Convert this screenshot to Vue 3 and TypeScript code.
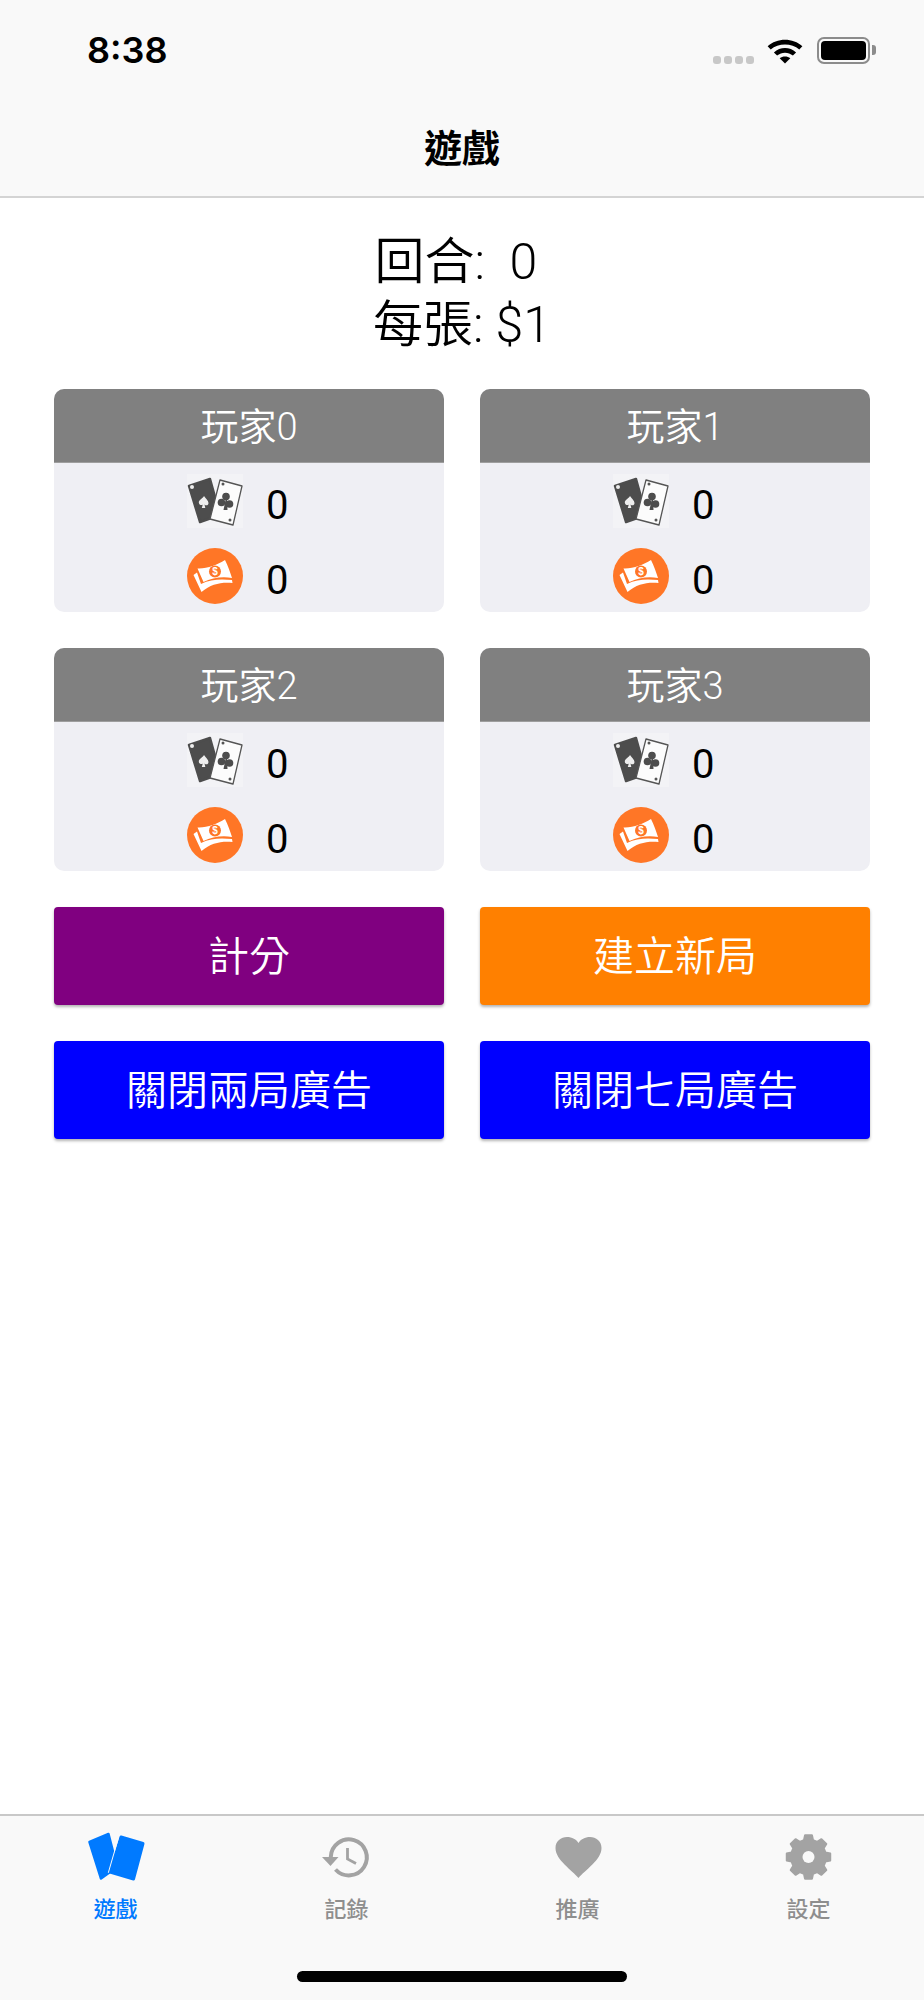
<script setup lang="ts">
const players = ['玩家0', '玩家1', '玩家2', '玩家3']
const actions = [
  { label: '計分', color: 'purple' },
  { label: '建立新局', color: 'orange' },
  { label: '關閉兩局廣告', color: 'blue' },
  { label: '關閉七局廣告', color: 'blue' }
]
const tabs = [
  { label: '遊戲', icon: 'cards', active: true },
  { label: '記錄', icon: 'history', active: false },
  { label: '推廣', icon: 'heart', active: false },
  { label: '設定', icon: 'gear', active: false }
]

function polar(radius: number, deg: number): string {
  const rad = (deg * Math.PI) / 180
  return `${(29.5 + radius * Math.sin(rad)).toFixed(2)} ${(27 - radius * Math.cos(rad)).toFixed(2)}`
}

const gearPath =
  'M' +
  Array.from({ length: 8 }, (_, i) => {
    const a = i * 45
    return [polar(17.5, a - 15), polar(22, a - 9), polar(22, a + 9), polar(17.5, a + 15)].join('L')
  }).join('L') +
  'Z'
</script>

<template>
  <div class="screen">
    <header class="top">
      <div class="status">
        <span class="time">8:38</span>
        <div class="status-icons">
          <div class="dots"><i></i><i></i><i></i><i></i></div>
          <svg class="wifi" width="38" height="27" viewBox="0 0 38 28">
            <path d="M1 9.500C10.500 .5 27.500 .5 37 9.500L33.800 13C26 6 12 6 4.200 13Z" />
            <path d="M7.500 16C14 10 24 10 30.500 16L27.200 19.300C22.500 15.300 15.500 15.300 10.800 19.300Z" />
            <path d="M13.500 22C16.500 19.600 21.500 19.600 24.500 22L19 27.500Z" />
          </svg>
          <div class="battery"><div class="battery-fill"></div></div>
          <div class="battery-cap"></div>
        </div>
      </div>
      <h1 class="title">遊戲</h1>
    </header>

    <main class="main">
      <div class="summary">
        <div>回合:&nbsp; 0&nbsp;</div>
        <div>每張: $1</div>
      </div>

      <div class="grid">
        <section v-for="p in players" :key="p" class="card">
          <div class="card-head">{{ p }}</div>
          <div class="row">
            <svg class="pic" width="56" height="54" viewBox="0 0 56 54">
              <rect width="56" height="54" fill="#f3f3f6" />
              <path d="M2 12L23 5L33 41L13 48Z" fill="#4d4d4d" stroke="#4d4d4d" stroke-width="2.500" stroke-linejoin="round" />
              <circle cx="5" cy="13" r="2" fill="#eee" />
              <path d="M17 22c1.500 2.500 4.500 4.500 4.500 7 0 2.500-2.500 3-4 1.500l.8 3.500h-3.500l1-3.500c-1 1.200-4 .5-4-2 0-2.500 3.700-4 5.200-6.500Z" fill="#eee" />
              <path d="M33 6L55 12L46 51L23 45Z" fill="#fcfcfc" stroke="#555" stroke-width="1.300" stroke-linejoin="round" />
              <circle cx="36" cy="10" r="1.500" fill="#555" />
              <circle cx="43" cy="46" r="1.500" fill="#555" />
              <circle cx="39" cy="22.500" r="3.800" fill="#4d4d4d" />
              <circle cx="34.500" cy="28.500" r="3.800" fill="#4d4d4d" />
              <circle cx="42.500" cy="30" r="3.800" fill="#4d4d4d" />
              <path d="M38.500 26h1.500l.5 10h-4Z" fill="#4d4d4d" />
            </svg>
            <span class="val">0</span>
          </div>
          <div class="row">
            <svg class="pic" width="56" height="56" viewBox="0 0 56 56">
              <circle cx="28" cy="28" r="28" fill="#ff7626" />
              <path d="M6.500 27L10 24.500L14 36C24 31 34 31 45 32L45.500 35C34 34 24 36 14.500 44Z" fill="#fff" />
              <path d="M10.500 20.500C20 21 30 17 38 12C41 18 43 24 45 30C35 28 25 30 16.500 34Z" fill="#fff" />
              <circle cx="28" cy="23.500" r="6" fill="#ff7626" />
              <text x="28" y="27" class="dollar">$</text>
            </svg>
            <span class="val">0</span>
          </div>
        </section>
      </div>

      <div class="actions">
        <button v-for="a in actions" :key="a.label" class="btn" :class="a.color">{{ a.label }}</button>
      </div>
    </main>

    <footer class="tabbar">
      <div class="tabs">
        <div v-for="t in tabs" :key="t.label" class="tab" :class="{ active: t.active }">
          <svg class="tab-icon" width="60" height="54" viewBox="0 0 60 54">
            <template v-if="t.icon === 'cards'">
              <path d="M3.500 12L22.500 4L31 37L15 48.500Z" fill="#007aff" stroke="#007aff" stroke-width="2.500" stroke-linejoin="round" />
              <path d="M35 7L57 13.500L47.500 49L24 42Z" fill="#007aff" stroke="#007aff" stroke-width="3" stroke-linejoin="round" />
              <path d="M32.800 6.500L22.300 42.800" fill="none" stroke="#f9f9f9" stroke-width="1" />
            </template>
            <template v-else-if="t.icon === 'history'">
              <path d="M13.800 27A18 18 0 1 1 18.500 39.500" fill="none" stroke="#a3a3a3" stroke-width="4" />
              <path d="M5 27H21.500L13.500 36Z" fill="#a3a3a3" />
              <path d="M30.500 18V29L39 33.500" fill="none" stroke="#a3a3a3" stroke-width="2.800" />
            </template>
            <template v-else-if="t.icon === 'heart'">
              <path d="M30.500 48C24 40 7.500 30 7.500 18C7.500 11 13 7 19 7C24 7 28.500 9.500 30.500 13C32.500 9.500 37 7 42 7C48 7 53.500 11 53.500 18C53.500 30 37 40 30.500 48Z" fill="#a3a3a3" />
            </template>
            <template v-else>
              <path :d="gearPath" fill="#a3a3a3" stroke="#a3a3a3" stroke-width="2" stroke-linejoin="round" />
              <circle cx="29.500" cy="27" r="6" fill="#f9f9f9" />
            </template>
          </svg>
          <span class="tab-label">{{ t.label }}</span>
        </div>
      </div>
      <div class="home"></div>
    </footer>
  </div>
</template>

<style>
html,
body {
  margin: 0;
  background: #fff;
}
</style>

<style scoped>
.screen {
  width: 924px;
  height: 2000px;
  display: flex;
  flex-direction: column;
  background: #fff;
  font-family: Roboto, "Noto Sans CJK TC", sans-serif;
  color: #000;
}
.top {
  height: 196px;
  flex: none;
  background: #f9f9f9;
  border-bottom: 2px solid #d4d4d4;
}
.status {
  height: 76px;
  padding: 12px 48px 0 87px;
  display: flex;
  align-items: center;
  justify-content: space-between;
}
.time {
  font-family: Inter, sans-serif;
  font-weight: 600;
  font-size: 36px;
}
.status-icons {
  display: flex;
  align-items: center;
}
.dots {
  display: flex;
  gap: 3px;
  margin-right: 12px;
  margin-top: 19px;
}
.dots i {
  width: 8px;
  height: 8px;
  border-radius: 3px;
  background: #c8c8c8;
}
.wifi {
  margin-right: 13px;
  fill: #000;
}
.battery {
  width: 53px;
  height: 27px;
  box-sizing: border-box;
  border: 2px solid #8c8c8c;
  border-radius: 7px;
  padding: 2px;
}
.battery-fill {
  width: 100%;
  height: 100%;
  background: #000;
  border-radius: 4px;
}
.battery-cap {
  width: 4px;
  height: 10px;
  margin-left: 2px;
  background: #8c8c8c;
  border-radius: 0 3px 3px 0;
}
.title {
  margin: 0;
  height: 108px;
  line-height: 116px;
  text-align: center;
  font-family: "Noto Sans CJK TC", sans-serif;
  font-size: 38px;
  font-weight: 700;
}
.main {
  flex: 1;
  padding: 33px 54px 0;
}
.summary {
  text-align: center;
  font-size: 50px;
  font-weight: 350;
  line-height: 63px;
  margin-bottom: 32px;
}
.grid,
.actions {
  display: grid;
  grid-template-columns: 390px 390px;
  column-gap: 36px;
  row-gap: 36px;
}
.actions {
  margin-top: 36px;
}
.card {
  height: 223px;
  border-radius: 10px;
  overflow: hidden;
  background: #efeff4;
}
.card-head {
  height: 74px;
  box-sizing: border-box;
  border-bottom: 1px solid #9e9e9e;
  background: #808080;
  color: #fff;
  font-size: 38px;
  font-weight: 350;
  line-height: 76px;
  text-align: center;
}
.row {
  height: 75px;
  display: flex;
  align-items: center;
  justify-content: center;
  gap: 23px;
}
.pic {
  flex: none;
}
.dollar {
  font-family: "Liberation Sans", sans-serif;
  font-size: 10px;
  font-weight: 700;
  text-anchor: middle;
  fill: #fff;
}
.val {
  width: 45px;
  padding-top: 10px;
  font-size: 40px;
  font-weight: 400;
}
.btn {
  height: 98px;
  border: 0;
  padding: 0 0 6px;
  border-radius: 4px;
  color: #fff;
  font-family: "Noto Sans CJK TC", sans-serif;
  font-size: 41px;
  font-weight: 350;
  box-shadow: 0 2px 3px rgba(0, 0, 0, 0.3);
}
.purple {
  background: #800080;
}
.orange {
  background: #ff8000;
}
.blue {
  background: #0000ff;
}
.tabbar {
  height: 186px;
  flex: none;
  box-sizing: border-box;
  border-top: 2px solid #c8c8c8;
  background: #f9f9f9;
  display: flex;
  flex-direction: column;
  align-items: center;
}
.tabs {
  width: 100%;
  display: grid;
  grid-template-columns: repeat(4, 231px);
}
.tab {
  display: flex;
  flex-direction: column;
  align-items: center;
  padding-top: 14px;
  color: #8e8e8e;
}
.tab.active {
  color: #007aff;
}
.tab-label {
  font-family: "Noto Sans CJK TC", sans-serif;
  font-size: 22px;
  line-height: 32px;
  margin-top: 7px;
  font-weight: 500;
}
.home {
  width: 330px;
  height: 11px;
  margin-top: 48px;
  background: #000;
  border-radius: 6px;
}
</style>
